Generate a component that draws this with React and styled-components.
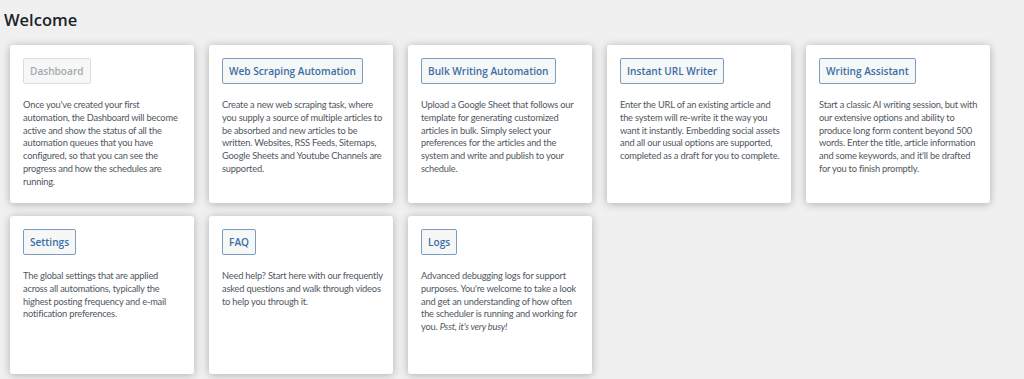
import React from 'react';
import styled, { createGlobalStyle } from 'styled-components';

const GlobalStyle = createGlobalStyle`
  html, body {
    margin: 0;
    padding: 0;
    background: #f0f0f1;
  }
  body {
    font-family: "Open Sans", "Noto Sans", sans-serif;
    color: #3c434a;
  }
`;

const Page = styled.div`
  width: 1024px;
  height: 379px;
  box-sizing: border-box;
  padding: 8px 0 0 4px;
  overflow: hidden;
`;

const Title = styled.h1`
  margin: 0 0 13px 0;
  font-size: 16.5px;
  line-height: 24px;
  font-weight: 600;
  color: #1d2327;
`;

const Grid = styled.div`
  display: grid;
  grid-template-columns: repeat(5, 184px);
  grid-auto-rows: 158px;
  column-gap: 15px;
  row-gap: 13px;
  padding-left: 6px;
`;

const Card = styled.div`
  background: #fff;
  border-radius: 3px;
  box-shadow: 0 1px 9px rgba(0, 0, 0, 0.28);
  padding: 13px 10px 0 13px;
  box-sizing: border-box;
  display: flex;
  flex-direction: column;
  align-items: flex-start;
`;

const Button = styled.span`
  display: inline-flex;
  align-items: center;
  height: 26px;
  box-sizing: border-box;
  padding: 0 6px;
  border: 1px solid ${p => (p.disabled ? '#dcdcde' : '#7b9dc0')};
  border-radius: 2px;
  background: #f6f7f7;
  color: ${p => (p.disabled ? '#a7aaad' : '#3a6ea5')};
  font-size: 10.1px;
  font-weight: 600;
  white-space: nowrap;
`;

const Desc = styled.p`
  margin: 15px 0 0 0;
  font-family: "Lato", "Open Sans", sans-serif;
  font-size: 9.3px;
  letter-spacing: -0.2px;
  line-height: 12.8px;
  color: #50575e;
  white-space: nowrap;
  em {
    font-style: italic;
  }
`;

const cards = [
  {
    label: 'Dashboard',
    disabled: true,
    lines: [
      "Once you've created your first",
      'automation, the Dashboard will become',
      'active and show the status of all the',
      'automation queues that you have',
      'configured, so that you can see the',
      'progress and how the schedules are',
      'running.',
    ],
  },
  {
    label: 'Web Scraping Automation',
    lines: [
      'Create a new web scraping task, where',
      'you supply a source of multiple articles to',
      'be absorbed and new articles to be',
      'written. Websites, RSS Feeds, Sitemaps,',
      'Google Sheets and Youtube Channels are',
      'supported.',
    ],
  },
  {
    label: 'Bulk Writing Automation',
    lines: [
      'Upload a Google Sheet that follows our',
      'template for generating customized',
      'articles in bulk. Simply select your',
      'preferences for the articles and the',
      'system and write and publish to your',
      'schedule.',
    ],
  },
  {
    label: 'Instant URL Writer',
    lines: [
      'Enter the URL of an existing article and',
      'the system will re-write it the way you',
      'want it instantly. Embedding social assets',
      'and all our usual options are supported,',
      'completed as a draft for you to complete.',
    ],
  },
  {
    label: 'Writing Assistant',
    lines: [
      'Start a classic AI writing session, but with',
      'our extensive options and ability to',
      'produce long form content beyond 500',
      'words. Enter the title, article information',
      "and some keywords, and it'll be drafted",
      'for you to finish promptly.',
    ],
  },
  {
    label: 'Settings',
    lines: [
      'The global settings that are applied',
      'across all automations, typically the',
      'highest posting frequency and e-mail',
      'notification preferences.',
    ],
  },
  {
    label: 'FAQ',
    lines: [
      'Need help? Start here with our frequently',
      'asked questions and walk through videos',
      'to help you through it.',
    ],
  },
  {
    label: 'Logs',
    lines: [
      'Advanced debugging logs for support',
      "purposes. You're welcome to take a look",
      'and get an understanding of how often',
      'the scheduler is running and working for',
      'you.',
    ],
    extra: "Psst, it's very busy!",
  },
];

export default function App() {
  return (
    <Page>
      <GlobalStyle />
      <Title>Welcome</Title>
      <Grid>
        {cards.map(c => (
          <Card key={c.label}>
            <Button disabled={c.disabled}>{c.label}</Button>
            <Desc>
              {c.lines.map((l, i) => (
                <React.Fragment key={i}>
                  {i > 0 && <br />}
                  {l}
                </React.Fragment>
              ))}
              {c.extra && (
                <>
                  {' '}
                  <em>{c.extra}</em>
                </>
              )}
            </Desc>
          </Card>
        ))}
      </Grid>
    </Page>
  );
}
